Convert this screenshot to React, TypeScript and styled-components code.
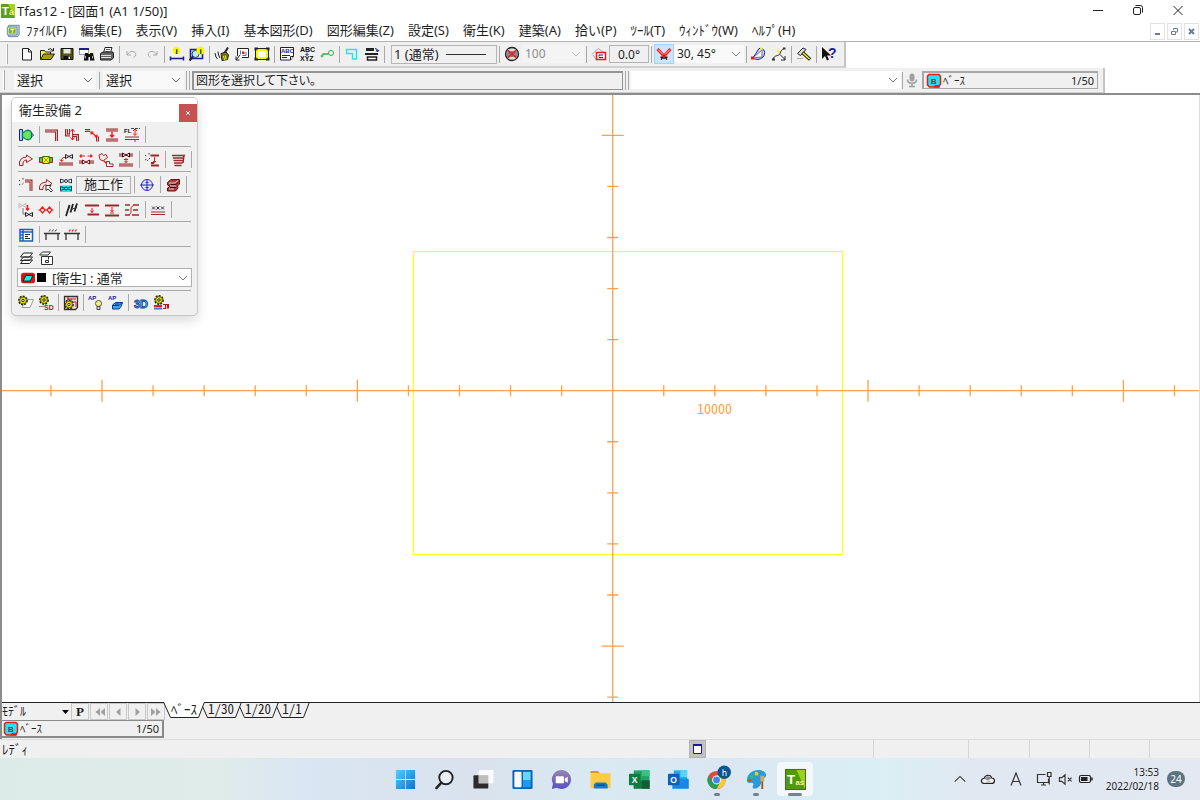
import React from "react";
import styled, { createGlobalStyle } from "styled-components";

const sans = `"Noto Sans", "Noto Sans CJK JP", sans-serif`;
const gothic = `"Noto Sans CJK JP", sans-serif`;

const c = {
  face: "#f0f0f0",
  line: "#a9a9a9",
  ink: "#1f1f1f",
  pipe: "#962c2c",
  red: "#f01818",
  navy: "#1c1c94",
  blue: "#2f7fd6",
  yellow: "#f8f800",
  olive: "#a8a000",
  cyan: "#18e8f0",
  axis: "#ffa04a",
};

const GlobalStyle = createGlobalStyle`
  html, body, #root { height: 100%; }
  body { margin: 0; background: #fff; color: ${c.ink}; font: 13px/16px ${sans}; overflow: hidden; }
  *, *::before, *::after { box-sizing: border-box; }
  button, select, input { font: inherit; color: inherit; margin: 0; padding: 0; border: 0; background: none; border-radius: 0; }
  svg { display: block; flex: none; }
`;

/* ---------- icon drawings, all on a 16-unit grid ---------- */

const Pipe = ({ d, w = 3 }: { d: string; w?: number }) => (
  <>
    <path d={d} stroke={c.pipe} strokeWidth={w} />
    <path d={d} stroke="#e3b3b3" strokeWidth={w - 2} />
  </>
);

const Gear = ({ x, y }: { x: number; y: number }) => (
  <g>
    <circle cx={x} cy={y} r="4" fill={c.yellow} stroke="#222" strokeWidth="1.8" strokeDasharray="2 1" />
    <circle cx={x} cy={y} r="3.4" fill="#e8e000" stroke="#554f00" strokeWidth="0.8" />
    <circle cx={x} cy={y} r="1.2" fill="#fff" stroke="#222" />
  </g>
);

const Glyph = ({ x, y, size = 6, fill = "#111", children }: { x: number; y: number; size?: number; fill?: string; children: string }) => (
  <text x={x} y={y} fontSize={size} fontWeight="700" fill={fill} stroke="none" fontFamily="Liberation Sans, sans-serif">
    {children}
  </text>
);

const Valve = ({ x, y, s = "#222" }: { x: number; y: number; s?: string }) => (
  <path d={`M${x} ${y}v4l7-4v4z`} stroke={s} fill="none" />
);

const icons: Record<string, React.ReactNode> = {
  newFile: <path d="M3.5 2.5h6l3 3v8.500h-9zM9.500 2.500v3.500h3" stroke="#222" fill="#fff" />,
  open: (
    <>
      <path d="M1.500 13.500v-9h4l1 1.500h5v2" stroke="#222" fill="#f4ee70" />
      <path d="M1.500 13.500l3-5.500h11l-3.500 5.500z" stroke="#222" fill={c.olive} />
      <path d="M9 3.500q3-2 5 1M14.500 2v3h-3" stroke="#222" />
    </>
  ),
  save: (
    <>
      <path d="M2 2.500h12v11H2z" fill="#55550a" stroke="#111" />
      <path d="M4.500 3h7v4.500h-7z" fill="#e8e8e8" />
      <path d="M4.500 10h7v3.500h-7z" fill="#111" />
      <path d="M9.500 10.500h1.500v2.500H9.500z" fill="#eee" />
    </>
  ),
  find: (
    <>
      <path d="M.5 2.500h9v6h-9z" fill="#fff" stroke="#999" />
      <path d="M0 2h10v2H0z" fill={c.navy} />
      <path d="M6 7h3v1h2V7h3l1.500 7.500H11V11H9.500v3.500H4.800z" fill="#111" />
      <path d="M6.500 10v2.500M13.500 10v2.500" stroke="#aaa" />
    </>
  ),
  print: (
    <>
      <path d="M4.500 7L6 1.500h7L11.500 7" fill="#fff" stroke="#222" />
      <path d="M7 3.500h4M6.500 5.500h4" stroke="#555" />
      <path d="M1.500 7.500L4 6h10l.5 2v4l-2.500 2H1.500z" fill="#666" stroke="#222" />
      <path d="M2 9.500h10M2 11.500h10" stroke="#ddd" />
    </>
  ),
  undo: <path d="M3 5v4h4M3.500 8.500c2-4 7-4 8-1 .8 2-.5 3-2 4" stroke="#a8a8a8" />,
  redo: <path d="M13 5v4H9M12.500 8.500c-2-4-7-4-8-1-.8 2 .5 3 2 4" stroke="#a8a8a8" />,
  measure: (
    <>
      <circle cx="7.500" cy="4.500" r="3.800" fill={c.yellow} />
      <Glyph x={6.500} y={7.500} size={8}>i</Glyph>
      <path d="M1.500 10.500v4M14.500 10.500v4" stroke={c.navy} strokeWidth="1.500" />
      <path d="M2 12.500h12" stroke={c.navy} strokeWidth="1.600" />
    </>
  ),
  inspect: (
    <>
      <path d="M1.500 3.500h12v9h-12z" stroke={c.navy} strokeWidth="1.600" fill="#e6f2f2" />
      <circle cx="6.500" cy="8" r="3.500" fill="#b9efe6" stroke="#1c4a4a" />
      <path d="M4 10.500L.5 14.500" stroke="#222" strokeWidth="2" />
      <circle cx="11.500" cy="4.500" r="4" fill={c.yellow} />
      <Glyph x={10.500} y={7.500} size={8}>i</Glyph>
    </>
  ),
  broom: (
    <>
      <path d="M14 1.500L10.500 7" stroke="#222" strokeWidth="2" />
      <path d="M7 7.500l5-1.500 2.500 3-1 4.500-5.500 1z" fill="#77701a" stroke="#222" />
      <path d="M9.500 10l1 4M11.500 9.500l.5 4" stroke={c.yellow} />
      <path d="M1 7l1 4 1.500 2M4 5.500l.5 3.500 1.500 3" stroke="#222" />
    </>
  ),
  region: (
    <>
      <path d="M3.500 10V2.500h11v9H8" stroke="#222" fill="#fff" />
      <path d="M6.500 4.500v4M12 6v3.500H8.500" stroke={c.blue} />
      <path d="M8 5.500h2.500V8H8z" fill={c.red} />
      <path d="M6 9l-4 5M2 10.500V14h3.500" stroke="#222" />
    </>
  ),
  fit: (
    <>
      <path d="M1.500 2.500h13v11h-13z" fill={c.yellow} stroke="#222" />
      <rect x="4" y="5" width="8" height="6" rx="1.500" fill="#fff" />
      <path d="M1.500 4.500v-2h2.500M12 2.500h2.500v2M1.500 11.500v2H4M12 13.500h2.500v-2" stroke="#222" strokeWidth="2" />
    </>
  ),
  abcPage: (
    <>
      <path d="M1.500 1.500h13v9l-3 3.500h-10z" fill="#fff" stroke="#222" />
      <Glyph x={2} y={7} size={6} fill={c.navy}>ABC</Glyph>
      <path d="M3 9.500h8M3 11.500h5" stroke={c.navy} />
      <path d="M11.500 14v-3.500h3" stroke="#222" fill="#ddd" />
    </>
  ),
  replace: (
    <>
      <Glyph x={1} y={6} size={7}>ABC</Glyph>
      <path d="M8 6.500v3M6.500 8L8 9.500 9.500 8" stroke={c.navy} />
      <Glyph x={1} y={15} size={7}>XYZ</Glyph>
    </>
  ),
  link: (
    <g stroke="#3aa648">
      <circle cx="12" cy="7" r="2.500" />
      <path d="M9.500 8H5q-1 0-1.500 1" strokeWidth="1.500" />
      <circle cx="3" cy="10" r="1" />
    </g>
  ),
  corner: <path d="M2.500 3.500h10v9.500h-4V7.500h-6z" stroke={c.cyan} strokeWidth="1.400" />,
  lines: (
    <>
      <path d="M2 3.500h8" stroke="#222" strokeWidth="3" />
      <path d="M1 8h13" stroke="#222" strokeWidth="2" />
      <path d="M3.500 11h9v3h-9z" stroke="#222" strokeWidth="1.500" fill="#fff" />
      <path d="M11 2.500q3 0 2.500 3M12 4l1.500 2L15 4" stroke={c.navy} />
    </>
  ),
  noHatch: (
    <>
      <circle cx="8" cy="8" r="6.500" stroke="#222" fill="#ddd" strokeWidth="1.300" />
      <path d="M2.500 6h11M2.500 8h11M2.500 10h11" stroke="#333" />
      <path d="M3.500 4l9 8M12.500 4l-9 8" stroke={c.red} strokeWidth="1.500" />
    </>
  ),
  plane: (
    <>
      <path d="M1 8.500L7 2.500l6 4" stroke="#aaa" />
      <path d="M2 9l3 4" stroke="#aaa" />
      <path d="M5.500 6.500h9v7h-9z" stroke={c.red} fill="#fff" strokeWidth="1.500" />
      <path d="M8 10.500V9h4M8 11.500h4" stroke={c.navy} />
    </>
  ),
  snap: (
    <>
      <path d="M4.500 11l3.500 1 3.500-1M5 13.500L8 10l3 3.500" stroke="#222" strokeWidth="1.500" />
      <path d="M1.500 3L8 10l6.500-7" stroke={c.red} strokeWidth="3" />
      <path d="M2 3.500l6 6 6-6" stroke="#ffc4c4" />
      <circle cx="8" cy="9.500" r="1.500" fill={c.red} />
    </>
  ),
  arc: (
    <>
      <path d="M8 2.500c6-1 7 5 4 8.500-3 3-7 3-10 1z" fill="#cfd5ff" stroke={c.navy} />
      <path d="M2 12L11 4v7z" stroke="#777" fill="#f4f4ff" />
      <path d="M0 10.500h3v3H0z" fill={c.red} />
      <path d="M9 2.500h2.500" stroke={c.yellow} strokeWidth="2" />
    </>
  ),
  spline: (
    <>
      <path d="M2 13.500c1-5 6-3 7-6s2-4 4-5" stroke="#222" />
      <path d="M9 8.500l5 5M14 10v4h-4" stroke="#222" />
      <path d="M1 13.500h3M12 2.500h2.500" stroke="#333" strokeWidth="2" />
      <path d="M6 5.500h3" stroke={c.yellow} strokeWidth="2" />
    </>
  ),
  hammer: (
    <>
      <path d="M1.500 7.500L7 2l3 1.500L4.500 9.500z" fill="#ddd" stroke="#222" />
      <path d="M6.500 6.500l7.500 7" stroke="#222" strokeWidth="3.500" />
      <path d="M7 7l6.500 6" stroke={c.yellow} strokeWidth="1.500" />
      <path d="M1 12.500h6" stroke="#aaa" />
    </>
  ),
  help: (
    <>
      <path d="M1 1v12l3-3 2 4.500 2-1L6 9.500h4z" fill="#111" />
      <Glyph x={7} y={12} size={14} fill={c.navy}>?</Glyph>
    </>
  ),
  mic: (
    <>
      <rect x="5.500" y="1.500" width="5" height="8" rx="2.500" fill="#a0a0a0" />
      <path d="M3.500 7.500c0 5 9 5 9 0M8 11.500v3M5 14.500h6" stroke="#a0a0a0" strokeWidth="1.500" />
    </>
  ),
  base: (
    <>
      <path d="M3 1.500h10l1.500 2v7.500l-2 3H3.500L1.500 12V3z" fill={c.cyan} stroke={c.red} strokeWidth="1.500" />
      <path d="M7 14.500l2-2.500h5v2.500z" fill={c.red} />
      <Glyph x={5} y={10.500} size={8} fill="#b02020">B</Glyph>
    </>
  ),
  tfas: (
    <>
      <rect width="16" height="16" fill="#5da01c" />
      <path d="M8 0h8v16z" fill="#a6cf2a" />
      <Glyph x={1} y={13} size={13} fill="#fff">T</Glyph>
      <Glyph x={9} y={13} size={10} fill="#f4f48c">a</Glyph>
    </>
  ),
  tfasDoc: (
    <>
      <path d="M3 1.500h12v11l-2 2H3z" fill="#bcd4ee" stroke="#5b7ba8" />
      <path d="M1.500 3.500h11v9h-11z" fill="#eef4dc" stroke="#5b7ba8" />
      <path d="M3 5h8v6H3z" fill="#79ad28" />
      <Glyph x={5} y={10.500} size={7} fill="#fff">T</Glyph>
    </>
  ),
  /* palette */
  pump: (
    <>
      <path d="M1.500 2.500h3v11h-3z" stroke={c.navy} fill="#9dd8f0" />
      <path d="M4.500 6l3-2q4-2 6 1.500v5q-2 3.500-6 1.500l-3-2z" fill="#62e858" stroke="#0e7d6a" strokeWidth="1.300" />
      <path d="M13.500 6l2 2-2 2" stroke={c.navy} />
    </>
  ),
  elbow: <Pipe d="M1 4h11.500v10" />,
  riser: (
    <>
      <Pipe d="M2.500 2v6H6M9 8.500h4.500V14" />
      <path d="M5.500 2v5" stroke={c.pipe} />
      <path d="M8.500 2v11M6.500 4.500l2-2.500 2 2.500M6.500 10.500l2 2.500 2-2.500" stroke={c.red} />
    </>
  ),
  slope: (
    <>
      <Pipe d="M1 3.500h5M13.500 9.500v5" />
      <path d="M7 5l6 5M9.500 5h-2.500v2.500M13 7.500v2.500h-2.500" stroke={c.red} strokeWidth="1.200" />
    </>
  ),
  gapDown: (
    <>
      <Pipe d="M2 3h12M2 13h12" />
      <path d="M8 4.500v5.500M6 8l2 2 2-2" stroke={c.red} strokeWidth="1.400" />
    </>
  ),
  level: (
    <>
      <Glyph x={0} y={5.500} size={6}>FL</Glyph>
      <path d="M7 1.500h9" stroke="#444" strokeDasharray="3 1" />
      <path d="M11 2v6M9 4l2-2 2 2M9 6.500L11 8.500l2-2" stroke={c.red} />
      <path d="M1 10h14M1 12.500h14" stroke={c.pipe} strokeWidth="1.200" />
      <path d="M11 12v3" stroke={c.red} />
    </>
  ),
  bend: <path d="M1.500 13.500q-1-8 7-8.500V3l6 4-6 3.500V8q-4 0-3.500 5.500z" stroke={c.pipe} fill="#f7e6e6" />,
  joint: (
    <>
      <path d="M1.500 5.500h13v5h-13z" fill="#4dc34a" stroke={c.pipe} />
      <path d="M4.500 4.500h7v7h-7z" fill={c.yellow} stroke="#4a6a00" />
      <path d="M5 5l6 6M11 5l-6 6" stroke={c.olive} />
    </>
  ),
  valveOnPipe: (
    <>
      <Pipe d="M1 12h14" />
      <Valve x={7.500} y={2.500} />
      <path d="M3.500 9q0-4 3.500-3.500M5.500 8L3.500 9.500 2 7.500" stroke={c.red} />
    </>
  ),
  valveSlide: (
    <>
      <Pipe d="M1 10h4M11.500 10H16" />
      <Valve x={4.500} y={8} s="#7a1010" />
      <path d="M1.500 4H7M3.500 2.500L2 4l1.500 1.500M9.500 4h5M12.500 2.500L14 4l-1.500 1.500" stroke={c.red} strokeWidth="1.200" />
    </>
  ),
  tee: (
    <>
      <path d="M1 3l3-1.500 1.500 2 2.500-1 1.500 3-4.500 3.500L2 7.500z" stroke={c.pipe} fill="#f7e6e6" />
      <path d="M8.500 9.500h3v2.500h3.500v2.500H8.500z" stroke={c.pipe} fill="#fff" />
      <path d="M5.500 8.500l3 3" stroke={c.red} strokeWidth="1.300" />
    </>
  ),
  valveGap: (
    <>
      <Pipe d="M1 3h3.500M11.500 3H15M1 13h14" />
      <Valve x={4.500} y={1} s="#300" />
      <path d="M8 6v5M6.500 9L8 10.500 9.500 9M6 7.500h4" stroke={c.red} />
    </>
  ),
  magicGap: (
    <>
      <path d="M1 3l2 2M5 1v2M1 8l2-1M6 6l-3 3" stroke="#333" strokeDasharray="1.500 1" />
      <path d="M6.500 3.500H15M7 13.500h8M7 11h3" stroke={c.pipe} strokeWidth="2" />
      <path d="M10.500 5v5.500M9 9l1.500 1.500L12 9" stroke={c.red} />
    </>
  ),
  hatch: <path d="M2 3.500h13M3 6h10.500M3.500 8.500h9.500M4 11h8.500M4.500 13.500h7M14 3l-1 8" stroke={c.pipe} strokeWidth="1.500" />,
  magicElbow: (
    <>
      <path d="M1 3l1.500 1.500M5 1v2M1 8l1.500-1M5.500 6l-2 2" stroke="#333" strokeDasharray="1.500 1" />
      <Pipe d="M7 4h6v10" />
    </>
  ),
  bendPick: (
    <>
      <path d="M1.500 12.500q-1-7 7-7.500V2.500l5.500 4-5.500 4V8q-4-.5-3.500 4.500z" stroke={c.pipe} fill="#f7e6e6" />
      <path d="M8 8.500h5l-1.500 2 3 3-1.500 1.500-3-3-2 1.500z" fill="#fff" stroke="#333" />
    </>
  ),
  valvePair: (
    <>
      <path d="M2 8.500h12V15H2z" fill={c.cyan} />
      <path d="M2.500 2v4l4-1.500M2.500 2l4 1.500M13.500 2v4l-4-1.500M13.500 2l-4 1.500M2.500 9.500v4l4-1.500M2.500 9.500l4 1.500M13.500 9.500v4l-4-1.500M13.500 9.500l-4 1.500" stroke="#23384a" />
      <circle cx="8" cy="4" r="1.500" stroke="#23384a" />
      <circle cx="8" cy="11.500" r="1.500" stroke="#23384a" />
    </>
  ),
  target: (
    <g stroke="#2a2ab4">
      <circle cx="8" cy="8" r="5.500" fill="#e4e4ff" />
      <path d="M1 8h14M8 2.500v11M6.500 5.500h3M6.500 10.500h3" />
    </g>
  ),
  block: (
    <>
      <path d="M2.500 5.500L6 2.500h8.500V7l-2 2 .5 2-2.500 3h-8v-3l3-2-3-1z" fill="#a83c3c" stroke="#6d1010" />
      <path d="M4 6h6l3-2.500M5 9h6M4 12h5" stroke="#f0c4c4" />
      <path d="M6 7.500h5l2-2M5 10.500h6" stroke="#3c0808" />
    </>
  ),
  valveMove: (
    <>
      <Valve x={1} y={1.500} s="#bbb" />
      <Valve x={7.500} y={10.500} />
      <path d="M9.500 3v5M8 6.500L9.500 8 11 6.500" stroke={c.red} strokeWidth="1.500" />
      <path d="M5 6v6h2" stroke="#777" />
    </>
  ),
  circles: (
    <g stroke={c.red} strokeWidth="1.200">
      <path d="M2 8l2.500-3L7 8l-2.500 3zM9 8l2.500-3L14 8l-2.500 3z" />
      <path d="M.5 8H2M7 8h2M14 8h1.500" />
    </g>
  ),
  slashes: (
    <>
      <path d="M2 14L5.500 3M6.500 10.500L9 2M10.500 9.500L13 1.500" stroke="#222" strokeWidth="1.800" />
      <path d="M3 9.500l3-5M7 7.500l6-2" stroke="#333" />
    </>
  ),
  gapA: (
    <>
      <path d="M1 3.500h14M3.500 12.500h11.500" stroke={c.pipe} strokeWidth="1.800" />
      <path d="M8 6v4.500M6.500 8.500L8 10.500l1.500-2" stroke={c.red} />
    </>
  ),
  gapB: (
    <>
      <path d="M1 3.500h14M1 13.500h14" stroke={c.pipe} strokeWidth="1.800" />
      <path d="M8 5v5M6.500 8L8 9.500 9.500 8M6 11h4" stroke={c.red} />
    </>
  ),
  gapC: (
    <>
      <path d="M1 3h5M9 3h6M1 8h4M9 8h5M1 13h5M8 13h7" stroke={c.pipe} strokeWidth="1.600" />
      <path d="M10 3L7 5.500v5L5 13" stroke={c.red} />
    </>
  ),
  crosses: (
    <>
      <path d="M2 4.500l3 3M5 4.500l-3 3M6.500 4.500l3 3M9.500 4.500l-3 3M11 4.500l3 3M14 4.500l-3 3" stroke="#333" />
      <path d="M1 10h14M1 12.500h14" stroke={c.pipe} strokeWidth="1.200" />
    </>
  ),
  sheet: (
    <>
      <path d="M2 2.500h12.500v11.500H2z" fill="#fff" stroke="#1560c8" strokeWidth="1.500" />
      <path d="M2 5h12.500M5 3v11M2 8h3M2 11h3" stroke="#1560c8" strokeWidth="1.500" />
      <path d="M7 7.500h5M7 9.500h3M7 11.500h5" stroke="#222" />
    </>
  ),
  support: (
    <>
      <path d="M2 13V6.500h12V13M0 6.500h16" stroke="#333" strokeWidth="1.300" />
      <path d="M5 4.500l1.500-2M8 4.500l1.500-2M11 4.500l1.500-2" stroke="#333" />
    </>
  ),
  supportRed: (
    <>
      <path d="M2 13V6.500h12V13M0 6.500h16" stroke="#333" strokeWidth="1.300" />
      <path d="M5 4.500l1.500-2M8 4.500l1.500-2M11 4.500l1.500-2" stroke={c.red} strokeWidth="1.200" />
    </>
  ),
  layers: (
    <g stroke="#222" fill="#fff">
      <path d="M2.500 13.500l3-3.500h9l-3 3.500zM2.500 10.500L5.500 7h9l-3 3.500zM2.500 7L5.500 3h9l-3 4z" />
    </g>
  ),
  layerBox: (
    <g stroke="#333" fill="#fff">
      <path d="M3.500 6.500h11v8h-11z" />
      <path d="M1.500 5L4.500 2h8L10 5z" />
      <path d="M10.500 6v3.500M7.500 10.500h3v2h-3z" />
    </g>
  ),
  swatch: (
    <>
      <rect x="0" y="2" width="16" height="12" rx="3" fill="#e31212" />
      <path d="M2.500 11.500l3-6.500h8l-3 6.500z" fill={c.cyan} stroke="#111" />
    </>
  ),
  gearSheet: (
    <>
      <path d="M4 12.500l3-8h8.500l-3.500 8z" fill="#fff" stroke="#999" />
      <Gear x={5} y={5.500} />
    </>
  ),
  gearSd: (
    <>
      <Gear x={6} y={5} />
      <Glyph x={6} y={14.500} size={7} fill="#b01818">SD</Glyph>
      <path d="M1 11.500h5" stroke="#888" />
    </>
  ),
  gearBook: (
    <>
      <path d="M1.500 1.500h13v11l-2 2h-11z" fill="#f6dede" stroke="#333" strokeWidth="1.300" />
      <path d="M4 4h9M8 4v3h5v5M5 2v3" stroke="#a02020" />
      <Gear x={6} y={9.500} />
    </>
  ),
  apBulb: (
    <>
      <Glyph x={0} y={5} size={6} fill={c.navy}>AP</Glyph>
      <circle cx="10.500" cy="8.500" r="3" fill="#f4f47a" stroke="#555" />
      <path d="M9 11.500h3v3H9z" fill="#ddd" stroke="#444" />
    </>
  ),
  apCube: (
    <>
      <Glyph x={0} y={5} size={6} fill={c.navy}>AP</Glyph>
      <path d="M4.500 10l3-2.500h7l-1.500 4-2 2.500h-6.500z" fill="#39a8f0" stroke="#0b3c8c" />
      <path d="M4.500 10.500h6.500l3-3M7 9h4" stroke="#0b3c8c" />
    </>
  ),
  threeD: (
    <text x="1" y="12.500" fontSize="11" fontWeight="700" fill="#5cc0ff" stroke="#123f94" strokeWidth="0.800" fontFamily="Liberation Sans, sans-serif">3D</text>
  ),
  gearStack: (
    <>
      <path d="M1 11h8" stroke={c.red} strokeWidth="2" />
      <path d="M1 13.500h8" stroke={c.blue} strokeWidth="2" />
      <Gear x={6} y={5} />
      <path d="M10 9.500h2.500v4H10M14.500 9.500v4M13 9.500h2.500v4" stroke="#a02020" strokeWidth="1.200" />
    </>
  ),
  /* window and tray */
  minimise: <path d="M3 8.500h10" stroke="#222" />,
  restore: (
    <>
      <rect x="3.500" y="5.500" width="7" height="7" rx="1.500" stroke="#222" />
      <path d="M5.500 3.500h5q2 0 2 2v5" stroke="#222" />
    </>
  ),
  close: <path d="M3.500 4l9 9M12.500 4l-9 9" stroke="#222" />,
  chevron: <path d="M4 6l4 4 4-4" stroke="#777" />,
  chevronUp: <path d="M2 11l6-6 6 6" stroke="#333" strokeWidth="1.200" />,
  cloud: (
    <>
      <path d="M4 12.500c-3.500-.5-3.500-5 0-5C5.500 3 11 3.500 11.500 7c4 0 4 5.500 0 5.500z" fill="#f0f0f0" stroke="#222" strokeWidth="1.200" />
      <path d="M5 8C6 4 10.500 4.500 11 7.500l-3 2z" fill="#8b8b8b" />
      <path d="M4.500 12l4-2.500 4 2z" fill="#bbb" />
    </>
  ),
  ime: <path d="M3 14.500L8 2l5 12.500M4.800 10.500h6.400" stroke="#333" strokeWidth="1.200" />,
  display: (
    <path d="M9.500 3.500H1.500v8h11V8M5 14h5M7.500 12v2M11.500 1.500h3.500v4h-3.500zM13.200 5.500v8" stroke="#333" strokeWidth="1.200" />
  ),
  mute: <path d="M1.500 6h2.500L7.500 3v10L4 10H1.500zM10.500 6l4 4M14.500 6l-4 4" stroke="#333" strokeWidth="1.200" />,
  battery: (
    <>
      <rect x="1.500" y="4.500" width="11" height="7" rx="1.500" stroke="#222" strokeWidth="1.200" />
      <path d="M3 6h6.500v4H3z" fill="#222" />
      <path d="M14 6.500v3" stroke="#222" strokeWidth="1.500" />
    </>
  ),
};

const Icon = ({ name, size = 16 }: { name: string; size?: number }) => (
  <svg width={size} height={size} viewBox="0 0 16 16" fill="none" aria-hidden="true">
    {icons[name]}
  </svg>
);

/* ---------- window chrome ---------- */

const Shell = styled.div`
  display: flex;
  flex-direction: column;
  min-height: 100vh;
`;

const TitleBar = styled.header`
  display: flex;
  align-items: center;
  gap: 2px;
  height: 21px;
  padding-left: 1px;
`;

const Title = styled.h1`
  flex: 1;
  margin: 0;
  font-size: 13px;
  font-weight: 400;
`;

const CaptionButtons = styled.div`
  display: flex;
  gap: 24px;
  padding: 0 14px 2px 0;
`;

const CaptionButton = styled.button`
  display: grid;
  place-items: center;
  width: 16px;
  height: 16px;
`;

const MenuBar = styled.nav`
  display: flex;
  align-items: center;
  gap: 14px;
  height: 21px;
  padding: 0 1px 0 6px;
  border-bottom: 1px solid #b4b4b4;
`;

const MenuIcon = styled.span`
  width: 6px;
`;

const MenuItem = styled.button`
  padding-bottom: 2px;
  white-space: nowrap;
`;

const ChildButtons = styled.div`
  display: flex;
  gap: 2px;
  margin-left: auto;
`;

const ChildButton = styled.button`
  width: 15px;
  height: 17px;
  border: 1px solid #e2e2e2;
  display: grid;
  place-items: center;
`;

/* ---------- toolbars ---------- */

const ToolBar = styled.div<{ $pad: number }>`
  display: flex;
  align-items: center;
  align-self: flex-start;
  height: 26px;
  padding: 0 5px 0 ${(p) => p.$pad}px;
  background: ${c.face};
  border-right: 2px solid #c4c4c4;
  border-bottom: 2px solid #d0d0d0;
`;

const Grip = styled.i<{ $after: number }>`
  width: 2px;
  height: 20px;
  margin-right: ${(p) => p.$after}px;
  border-left: 1px solid #fff;
  border-right: 1px solid #aaa;
`;

const Tool = styled.button<{ $active?: boolean }>`
  display: grid;
  place-items: center;
  flex: none;
  width: 20px;
  height: 20px;
  background: ${(p) => (p.$active ? "#cce4f9" : "transparent")};
  outline: ${(p) => (p.$active ? "1px solid #a6d2f7" : "none")};
  outline-offset: -1px;
`;

const Split = styled.i<{ $w?: number }>`
  flex: none;
  width: ${(p) => p.$w ?? 5}px;
  height: 17px;
  background: linear-gradient(${c.line}, ${c.line}) center / 1px 100% no-repeat;
`;

const DoubleSplit = styled.i`
  flex: none;
  width: 4px;
  height: 19px;
  margin: 0 2px;
  border-left: 1px solid ${c.line};
  border-right: 1px solid ${c.line};
`;

const LineStyle = styled.button`
  display: flex;
  align-items: center;
  gap: 7px;
  width: 106px;
  height: 19px;
  margin-left: 4px;
  padding-left: 2px;
  border: 1px solid #b4b4b4;
  white-space: nowrap;

  &::after {
    content: "";
    width: 40px;
    border-top: 1px solid #333;
  }
`;

const AngleInput = styled.input`
  width: 40px;
  height: 18px;
  border: 1px solid #b4b4b4;
  background: ${c.face};
  font-size: 12px;
  text-align: center;
`;

const Field = styled.span<{ $w?: number; $bg?: string; $h?: number; $muted?: boolean; $edge?: boolean }>`
  display: grid;
  flex: none;
  align-items: center;
  width: ${(p) => (p.$w ? p.$w + "px" : "auto")};
  height: ${(p) => p.$h ?? 18}px;
  background: ${(p) => p.$bg ?? "#f9f9f9"};
  color: ${(p) => (p.$muted ? "#8c8c8c" : c.ink)};
  border: ${(p) => (p.$edge ? "1px solid #b0b0b0" : "0")};

  > * {
    grid-area: 1 / 1;
  }
  > svg {
    justify-self: end;
    pointer-events: none;
    opacity: ${(p) => (p.$muted ? 0.4 : 1)};
  }
`;

const Select = styled.select<{ $indent?: number; $size?: number }>`
  appearance: none;
  width: 100%;
  height: 100%;
  padding-left: ${(p) => p.$indent ?? 2}px;
  font-size: ${(p) => p.$size ?? 13}px;
  opacity: 1;
  &:disabled {
    opacity: 1;
  }
`;

const Prompt = styled.output`
  flex: none;
  width: 431px;
  height: 19px;
  padding-left: 2px;
  border: 2px solid #949494;
  border-right-width: 1px;
  border-bottom-width: 1px;
  line-height: 16px;
  font-size: 12px;
  font-feature-settings: "palt";
`;

const BaseButton = styled.button<{ $w: number; $sunken?: boolean }>`
  display: flex;
  align-items: center;
  justify-content: space-between;
  flex: none;
  width: ${(p) => p.$w}px;
  height: 18px;
  padding: 0 3px 0 ${(p) => (p.$sunken ? 2 : 1)}px;
  background: ${c.face};
  border: solid ${(p) => (p.$sunken ? "#a8a8a8" : "#8a8a8a")};
  border-width: ${(p) => (p.$sunken ? "2px 1px 1px 2px" : "1px 2px 2px 0")};
  font-size: 11px;
  line-height: 14px;
  margin-left: ${(p) => (p.$sunken ? 2 : 0)}px;
`;

const BaseName = styled.span`
  display: flex;
  align-items: center;
  gap: 1px;
`;

/* ---------- drawing area ---------- */

const Frame = styled.main`
  display: flex;
  flex-direction: column;
  flex: 1;
  min-height: 0;
  border: solid #8c8c8c;
  border-width: 2px 0 0 2px;
  margin-top: -1px;
`;

const Stage = styled.section`
  position: relative;
  flex: 1;
  display: grid;
  min-height: 200px;
  overflow: hidden;
  border-right: 1px solid #ddd;
`;

const Drawing = styled.svg`
  position: absolute;
  inset: 0;
  width: 100%;
  height: 100%;
`;

const steps = Array.from({ length: 23 }, (_, i) => i - 11).filter((n) => n !== 0);
const PITCH = 51.07;

const Sheet = () => (
  <Drawing viewBox="2 95 1197 607" preserveAspectRatio="xMidYMid slice">
    <rect x="413.5" y="251.5" width="429" height="303" fill="none" stroke="#ffff1e" strokeWidth="1.200" />
    <g stroke={c.axis} strokeWidth="1.300">
      <path d="M-400 390.700H1600M612.700-200V1000" />
      {steps.map((n) => {
        const r = n % 5 === 0 ? 11 : 5.5;
        const x = 612.7 + n * PITCH;
        const y = 390.7 + n * PITCH;
        return <path key={n} d={`M${x} ${390.7 - r}v${r * 2}M${612.7 - r} ${y}h${r * 2}`} />;
      })}
    </g>
    <text x="697" y="414" fontSize="14" fill={c.axis} fontFamily="Noto Sans CJK JP, sans-serif" style={{ fontFeatureSettings: '"hwid"' }}>
      10000
    </text>
  </Drawing>
);

/* ---------- floating palette ---------- */

const Palette = styled.aside`
  position: absolute;
  top: 2px;
  left: 9px;
  width: 187px;
  padding-bottom: 1px;
  background: ${c.face};
  border: 1px solid #c6c6c6;
  border-radius: 5px;
  box-shadow: 0 5px 12px rgba(0, 0, 0, 0.14);
  overflow: hidden;
`;

const PaletteHead = styled.div`
  display: flex;
  align-items: flex-end;
  justify-content: space-between;
  height: 24px;
  padding-left: 7px;
  background: #fff;
`;

const PaletteTitle = styled.h2`
  margin: 0;
  padding-bottom: 4px;
  font-size: 13px;
  font-weight: 400;
`;

const PaletteClose = styled.button`
  display: grid;
  place-items: center;
  width: 18px;
  height: 18px;
  background: #c75050;
`;

const PaletteRow = styled.div<{ $rule?: boolean; $h?: number }>`
  display: flex;
  align-items: center;
  height: ${(p) => p.$h ?? 25}px;
  margin: 0 6px 0 4px;
  background: ${(p) => (p.$rule ? `linear-gradient(${c.line}, ${c.line}) 2px 100% / 100% 1px no-repeat` : "none")};
`;

const LayerRow = styled.div`
  display: flex;
  height: 22px;
  padding: 0 5px;
  border-bottom: 1px solid transparent;
`;

const LayerIcons = styled.span`
  display: flex;
  align-items: center;
  gap: 2px;
  padding-left: 3px;
`;

const ColourChip = styled.i`
  width: 9px;
  height: 9px;
  background: #000;
`;

const WorkButton = styled.button`
  width: 55px;
  height: 18px;
  border: 1px solid #b0b0b0;
  line-height: 15px;
`;

const rows: string[][] = [
  ["pump", "|", "elbow", "riser", "slope", "gapDown", "level", "|"],
  ["bend", "joint", "valveOnPipe", "valveSlide", "tee", "valveGap", "|", "magicGap", "|", "hatch", "|"],
  ["magicElbow", "bendPick", "valvePair", "#施工作", "|", "target", "|", "block", "|"],
  ["valveMove", "circles", "|", "slashes", "gapA", "gapB", "gapC", "|", "crosses", "|"],
  ["sheet", "|", "support", "supportRed", "|"],
];

const Tools = ({ items, split }: { items: string[]; split?: number }) => (
  <>
    {items.map((item, i) =>
      item === "|" ? (
        <Split key={i} $w={split} />
      ) : item[0] === "#" ? (
        <WorkButton key={i}>{item.slice(1)}</WorkButton>
      ) : (
        <Tool key={i} aria-label={item} $active={item === "snap"}>
          <Icon name={item} />
        </Tool>
      )
    )}
  </>
);

/* ---------- sheet tabs and status ---------- */

const SheetBar = styled.div`
  display: flex;
  flex-direction: column;
  background: ${c.face};
  border-top: 1px solid #222;
  height: 37px;
`;

const SheetRow = styled.div`
  display: flex;
  height: 17px;
`;

const ModelField = styled(Field)`
  font-family: ${gothic};
`;

const ModelSelect = styled(Select)`
  padding-bottom: 3px;
`;

const NavButton = styled.button`
  display: grid;
  place-items: center;
  width: 18px;
  height: 17px;
  margin-right: 1px;
  border: 1px solid;
  border-color: #fff #8a8a8a #8a8a8a #fff;
  outline: 1px solid #c8c8c8;
  outline-offset: -1px;
  font: 700 13px/14px "Liberation Serif", serif;
  &:last-of-type {
    margin-right: 0;
  }
`;

const NavButtons = styled.div`
  display: flex;
`;

const Tabs = styled.div`
  display: flex;
  margin: -1px 0 0 -2px;
`;

const Tab = styled.button<{ $w: number; $z: number }>`
  display: grid;
  justify-items: center;
  position: relative;
  z-index: ${(p) => p.$z};
  width: ${(p) => p.$w}px;
  height: 17px;
  margin-right: -5px;
  font: 13px/14px ${gothic};
  font-feature-settings: "hwid";

  > * {
    grid-area: 1 / 1;
  }
`;

const tabs = [
  { label: "ﾍﾞｰｽ", w: 42 },
  { label: "1/30", w: 42 },
  { label: "1/20", w: 42 },
  { label: "1/1", w: 36 },
];

const StatusBar = styled.footer`
  display: flex;
  align-items: stretch;
  height: 19px;
  background: ${c.face};
  border-top: 1px solid #dcdcdc;
`;

const StatusText = styled.span`
  padding-left: 2px;
  font: 13px/18px ${gothic};
  flex: 691 1 0;
`;

const StatusIcon = styled.button`
  width: 17px;
  display: grid;
  place-items: center;
  background: #c2c2c2;
  border: 1px solid #b4b4b4;
`;

const StatusCell = styled.span<{ $grow: number }>`
  flex: ${(p) => p.$grow} 1 0;
  border-right: 1px solid #d6d6d6;
  &:last-child {
    border-right: 0;
  }
`;

/* ---------- taskbar ---------- */

const TaskBar = styled.div`
  display: grid;
  grid-template-columns: 1fr auto 1fr;
  align-items: center;
  height: 42px;
  background: linear-gradient(90deg, #dcebe8 0%, #e0ebea 18%, #dae6f3 25%, #d9e2ed 40%, #d9eaf2 50%, #dae7f2 60%, #daeff5 73%, #e1e8f2 82%, #e3e8f1 100%);
`;

const Apps = styled.div`
  display: flex;
  gap: 3px;
  grid-column: 2;
`;

const AppButton = styled.button<{ $state?: "running" | "active" }>`
  display: grid;
  place-items: center;
  position: relative;
  width: 36px;
  height: 34px;
  border-radius: 4px;
  background: ${(p) => (p.$state === "active" ? "rgba(255,255,255,.65)" : "none")};

  &::after {
    content: "";
    position: absolute;
    bottom: 0;
    display: ${(p) => (p.$state ? "block" : "none")};
    width: ${(p) => (p.$state === "active" ? 14 : 6)}px;
    height: 3px;
    border-radius: 2px;
    background: #75828c;
  }
`;

const Tray = styled.div`
  display: flex;
  align-items: center;
  justify-content: flex-end;
  padding-right: 15px;
`;

const TrayButton = styled.button<{ $w: number }>`
  display: grid;
  place-items: center;
  width: ${(p) => p.$w}px;
  height: 24px;
`;

const Clock = styled.time`
  margin: 0 8px 0 6px;
  text-align: right;
  font-size: 10px;
  line-height: 14px;
`;

const Badge = styled.span`
  width: 18px;
  height: 16px;
  border-radius: 8px;
  background: #5c7482;
  color: #fff;
  font-size: 10px;
  line-height: 16px;
  text-align: center;
`;

const apps: { name: string; state?: "running" | "active"; art: React.ReactNode }[] = [
  {
    name: "Start",
    art: (
      <>
        <defs>
          <linearGradient id="win" x1="0" y1="0" x2="1" y2="1">
            <stop stopColor="#4fd0fa" />
            <stop offset="1" stopColor="#0a74d0" />
          </linearGradient>
        </defs>
        <path d="M2 2h9.600v9.600H2zM12.400 2H22v9.600h-9.600zM2 12.400h9.600V22H2zM12.400 12.400H22V22h-9.600z" fill="url(#win)" />
      </>
    ),
  },
  {
    name: "Search",
    art: (
      <>
        <circle cx="13.500" cy="10" r="7" fill="#e9eef5" stroke="#222" strokeWidth="2" />
        <path d="M8.500 15.500L3.500 21" stroke="#222" strokeWidth="2.600" strokeLinecap="round" />
      </>
    ),
  },
  {
    name: "Task view",
    art: (
      <>
        <rect x="1.500" y="7.500" width="15.500" height="14" rx="1" fill="#2b2b2b" />
        <rect x="7" y="2" width="15.500" height="14" rx="1" fill="#fff" opacity=".85" />
        <path d="M7 7.500h10V16H7z" fill="#bdbdbd" />
      </>
    ),
  },
  {
    name: "Widgets",
    art: (
      <>
        <rect x="1.500" y="2" width="21" height="20" rx="1.500" fill="#0b64b4" />
        <rect x="3.500" y="4" width="7.500" height="16" rx="1" fill="#f7fafc" />
        <path d="M12.500 4h8v9h-8z" fill="#66d6fb" />
        <path d="M12.500 13h8v7h-8z" fill="#1a9cf0" />
      </>
    ),
  },
  {
    name: "Chat",
    art: (
      <>
        <defs>
          <linearGradient id="chat" x1="0" y1="0" x2="0" y2="1">
            <stop stopColor="#9a84b4" />
            <stop offset="1" stopColor="#5450c8" />
          </linearGradient>
        </defs>
        <path d="M12 2a10 10 0 11-5 18.700L2 22l1-5.500A10 10 0 0112 2z" fill="url(#chat)" />
        <rect x="6" y="8.500" width="8.500" height="7.500" rx="1" fill="#fff" />
        <path d="M15.500 11l3-2v6.500l-3-2z" fill="#fff" />
      </>
    ),
  },
  {
    name: "Explorer",
    art: (
      <>
        <path d="M1.500 3h8l2 2.500h-10z" fill="#d89a17" />
        <path d="M1.500 5.500h21V21h-21z" fill="#ffcb45" />
        <path d="M5 21.500v-4l2-2.500h10.500l2 2.500v4z" fill="#1279cc" />
        <path d="M8 18h8.500" stroke="#0b4c8c" strokeWidth="1.500" />
      </>
    ),
  },
  {
    name: "Excel",
    art: (
      <>
        <path d="M6 2.500h16.500v19H6z" fill="#21a366" />
        <path d="M14.500 2.500h8v6h-8z" fill="#33c481" />
        <path d="M6 13h16.500v8.500H6z" fill="#107c41" />
        <path d="M14.500 13h8v8.500h-8z" fill="#185c37" />
        <rect x="1" y="6" width="12" height="12" rx="1" fill="#107c41" />
        <Glyph x={4} y={15.500} size={9} fill="#fff">X</Glyph>
      </>
    ),
  },
  {
    name: "Outlook",
    art: (
      <>
        <path d="M7 2.500h14v12H7z" fill="#28a8ea" />
        <path d="M14 2.500h7v7h-7z" fill="#50d9ff" />
        <path d="M5.500 11l17-0v10.500h-17z" fill="#1490df" />
        <path d="M5.500 21.500l17-9.500v9.500z" fill="#1a86e2" />
        <rect x="1" y="6" width="12" height="12" rx="1" fill="#0f5fb8" />
        <Glyph x={3.500} y={15.500} size={9} fill="#fff">O</Glyph>
      </>
    ),
  },
  {
    name: "Chrome",
    state: "running",
    art: (
      <>
        <circle cx="11" cy="12.500" r="9.500" fill="#dd4b3e" />
        <path d="M2.800 7.700A9.500 9.500 0 0011 22l4-7-4-2.500-4 2z" fill="#22a058" />
        <path d="M11 22a9.500 9.500 0 008.200-14.200H11l4 6.500z" fill="#fbc934" />
        <circle cx="11" cy="12.500" r="4.600" fill="#fff" />
        <circle cx="11" cy="12.500" r="3.600" fill="#4285f4" />
        <circle cx="19" cy="4.500" r="7" fill="#0b5593" />
        <text x="16.500" y="8" fontSize="9" fill="#fff" fontFamily="Noto Sans, sans-serif">h</text>
      </>
    ),
  },
  {
    name: "Paint",
    state: "running",
    art: (
      <>
        <path d="M2 13C2 6 8 2 14 2c5 0 8 2.500 8 5.500 0 3-4 3-4.500 6S15 21.500 10 21.500c-2.500 0-2.500-2-1.500-3.500s-.5-2.500-2-2.500S2 16 2 13z" fill="#2a9bd8" />
        <circle cx="7" cy="9" r="2" fill="#3fbf4a" />
        <circle cx="12" cy="6" r="2" fill="#f3c32e" />
        <circle cx="5" cy="13" r="1.800" fill="#e04a2a" />
        <path d="M16 8h4v6h-4z" fill="#d9a45c" />
        <path d="M17 14h2v8h-2z" fill="#a8571c" />
      </>
    ),
  },
  {
    name: "Tfas",
    state: "active",
    art: (
      <>
        <rect x="1.500" y="1.500" width="21" height="21" fill="#4f9a0e" stroke="#4d5b2a" />
        <path d="M13 2h9v20z" fill="#9ccf1e" />
        <Glyph x={3} y={17} size={14} fill="#fff">T</Glyph>
        <Glyph x={12} y={18} size={8} fill="#f4f49a">as</Glyph>
      </>
    ),
  },
];

const menus = ["ﾌｧｲﾙ(F)", "編集(E)", "表示(V)", "挿入(I)", "基本図形(D)", "図形編集(Z)", "設定(S)", "衛生(K)", "建築(A)", "拾い(P)", "ﾂｰﾙ(T)", "ｳｨﾝﾄﾞｳ(W)", "ﾍﾙﾌﾟ(H)"];

const Combo = ({ label, value, w, size, indent, muted, bg }: { label: string; value: string; w: number; size?: number; indent?: number; muted?: boolean; bg?: string }) => (
  <Field $w={w} $muted={muted} $bg={bg}>
    <Select aria-label={label} disabled={muted} $size={size} $indent={indent}>
      <option>{value}</option>
    </Select>
    <Icon name="chevron" />
  </Field>
);

const arrows = [
  { name: "First", d: "M7 2v8L2.500 6zM12 2v8L7.500 6z" },
  { name: "Previous", d: "M8.500 2v8L4 6z" },
  { name: "Next", d: "M4.500 2v8L9 6z" },
  { name: "Last", d: "M1 2v8l4.500-4zM6 2v8l4.500-4z" },
];

export default function App() {
  return (
    <>
      <GlobalStyle />
      <Shell>
        <TitleBar>
          <Icon name="tfas" size={14} />
          <Title>Tfas12 - [図面1 (A1 1/50)]</Title>
          <CaptionButtons>
            {["minimise", "restore", "close"].map((n) => (
              <CaptionButton key={n} aria-label={n}>
                <Icon name={n} />
              </CaptionButton>
            ))}
          </CaptionButtons>
        </TitleBar>

        <MenuBar>
          <MenuIcon>
            <Icon name="tfasDoc" size={14} />
          </MenuIcon>
          {menus.map((m) => (
            <MenuItem key={m}>{m}</MenuItem>
          ))}
          <ChildButtons>
            <ChildButton aria-label="Minimise drawing">
              <svg width="9" height="9" stroke="#6d7c8c" fill="none"><path d="M2 7h5" strokeWidth="2" /></svg>
            </ChildButton>
            <ChildButton aria-label="Restore drawing">
              <svg width="9" height="9" stroke="#6d7c8c" fill="none"><path d="M1.500 4.500h4v3h-4zM3.500 3V1.500h4v3.500H6" /></svg>
            </ChildButton>
            <ChildButton aria-label="Close drawing">
              <svg width="9" height="9" stroke="#6d7c8c" fill="none"><path d="M2 2l5 5M7 2L2 7" strokeWidth="2" /></svg>
            </ChildButton>
          </ChildButtons>
        </MenuBar>

        <ToolBar $pad={6}>
          <Grip $after={9} />
          <Tools
            items={["newFile", "open", "save", "find", "print", "|", "undo", "redo", "|", "measure", "inspect", "|", "broom", "region", "fit", "|", "abcPage", "replace", "link", "|", "corner", "lines", "|"]}
          />
          <LineStyle>1 (通常)</LineStyle>
          <Split />
          <Tools items={["noHatch"]} />
          <Combo label="縮尺" value="100" w={62} size={12} indent={3} muted bg="#f4f4f4" />
          <Split />
          <Tools items={["plane"]} />
          <AngleInput aria-label="角度" defaultValue="0.0°" />
          <Split />
          <Tools items={["snap"]} />
          <Combo label="角度ピッチ" value="30, 45°" w={70} size={12} indent={3} />
          <Split />
          <Tools items={["arc", "spline", "|", "hammer", "|", "help"]} />
        </ToolBar>

        <ToolBar $pad={3}>
          <Grip $after={9} />
          <Combo label="選択種別" value="選択" w={82} indent={3} />
          <Split $w={7} />
          <Combo label="選択方法" value="選択" w={81} indent={3} />
          <DoubleSplit />
          <Prompt>図形を選択して下さい。</Prompt>
          <DoubleSplit />
          <Combo label="入力" value="" w={270} bg="#fff" />
          <Split $w={3} />
          <Icon name="mic" />
          <BaseButton $w={176} $sunken>
            <BaseName>
              <Icon name="base" />
              ﾍﾞｰｽ
            </BaseName>
            1/50
          </BaseButton>
        </ToolBar>

        <Frame>
          <Stage>
            <Sheet />
            <Palette>
              <PaletteHead>
                <PaletteTitle>衛生設備 2</PaletteTitle>
                <PaletteClose aria-label="閉じる">
                  <svg width="6" height="6" stroke="#fff"><path d="M1 1l4 4M5 1L1 5" /></svg>
                </PaletteClose>
              </PaletteHead>
              {rows.map((items, i) => (
                <PaletteRow key={i} $rule>
                  <Tools items={items} split={6} />
                </PaletteRow>
              ))}
              <PaletteRow $h={21}>
                <Tools items={["layers", "layerBox"]} />
              </PaletteRow>
              <LayerRow>
                <Field $w={175} $h={19} $bg="#fff" $edge>
                  <LayerIcons>
                    <Icon name="swatch" size={14} />
                    <ColourChip />
                  </LayerIcons>
                  <Select aria-label="レイヤ" $indent={34}>
                    <option>[衛生] : 通常</option>
                  </Select>
                  <Icon name="chevron" />
                </Field>
              </LayerRow>
              <PaletteRow $rule $h={1} />
              <PaletteRow $h={23}>
                <Tools items={["gearSheet", "gearSd", "|", "gearBook", "|", "apBulb", "apCube", "|", "threeD", "gearStack"]} split={5} />
              </PaletteRow>
            </Palette>
          </Stage>

          <SheetBar>
            <SheetRow>
              <ModelField $w={69} $h={17} $bg={c.face}>
                <ModelSelect aria-label="モデル" $indent={0} $size={12}>
                  <option>ﾓﾃﾞﾙ</option>
                </ModelSelect>
                <svg width="12" height="8"><path d="M3 1h7L6.500 5z" fill="#000" /></svg>
              </ModelField>
              <NavButtons>
                <NavButton>P</NavButton>
                {arrows.map((a) => (
                  <NavButton key={a.name} aria-label={a.name}>
                    <svg width="13" height="12"><path d={a.d} fill="#a0a0a0" /></svg>
                  </NavButton>
                ))}
              </NavButtons>
              <Tabs>
                {tabs.map((t, i) => (
                  <Tab key={t.label} $w={t.w} $z={tabs.length - i}>
                    <svg width={t.w} height="17">
                      <path d={`M.5 0L7.500 15.500H${t.w - 6.5}L${t.w - 0.5} 0`} fill={i === 0 ? "#fff" : c.face} stroke="#222" />
                      {i > 0 && <path d={`M0 .5H${t.w}`} stroke="#222" />}
                    </svg>
                    <span>{t.label}</span>
                  </Tab>
                ))}
              </Tabs>
            </SheetRow>
            <BaseButton $w={162}>
              <BaseName>
                <Icon name="base" />
                ﾍﾞｰｽ
              </BaseName>
              1/50
            </BaseButton>
          </SheetBar>
        </Frame>

        <StatusBar>
          <StatusText>ﾚﾃﾞｨ</StatusText>
          <StatusIcon aria-label="用紙">
            <svg width="11" height="12"><path d="M1.500 1.500h8v9h-8z" fill="#fff" stroke={c.navy} /><path d="M1 2h9" stroke={c.navy} strokeWidth="2" /></svg>
          </StatusIcon>
          <StatusCell $grow={168} />
          <StatusCell $grow={95} />
          <StatusCell $grow={60} />
          <StatusCell $grow={59} />
          <StatusCell $grow={60} />
          <StatusCell $grow={50} />
        </StatusBar>

        <TaskBar>
          <Apps>
            {apps.map((a) => (
              <AppButton key={a.name} aria-label={a.name} $state={a.state}>
                <svg width="23" height="23" viewBox="0 0 24 24" fill="none" overflow="visible">
                  {a.art}
                </svg>
              </AppButton>
            ))}
          </Apps>
          <Tray>
            <TrayButton $w={28} aria-label="Hidden icons"><Icon name="chevronUp" size={14} /></TrayButton>
            <TrayButton $w={28} aria-label="OneDrive"><Icon name="cloud" /></TrayButton>
            <TrayButton $w={28} aria-label="Input mode"><Icon name="ime" /></TrayButton>
            <TrayButton $w={28} aria-label="Network"><Icon name="display" /></TrayButton>
            <TrayButton $w={14} aria-label="Sound"><Icon name="mute" size={15} /></TrayButton>
            <TrayButton $w={28} aria-label="Battery"><Icon name="battery" /></TrayButton>
            <Clock>
              13:53
              <br />
              2022/02/18
            </Clock>
            <Badge>24</Badge>
          </Tray>
        </TaskBar>
      </Shell>
    </>
  );
}
